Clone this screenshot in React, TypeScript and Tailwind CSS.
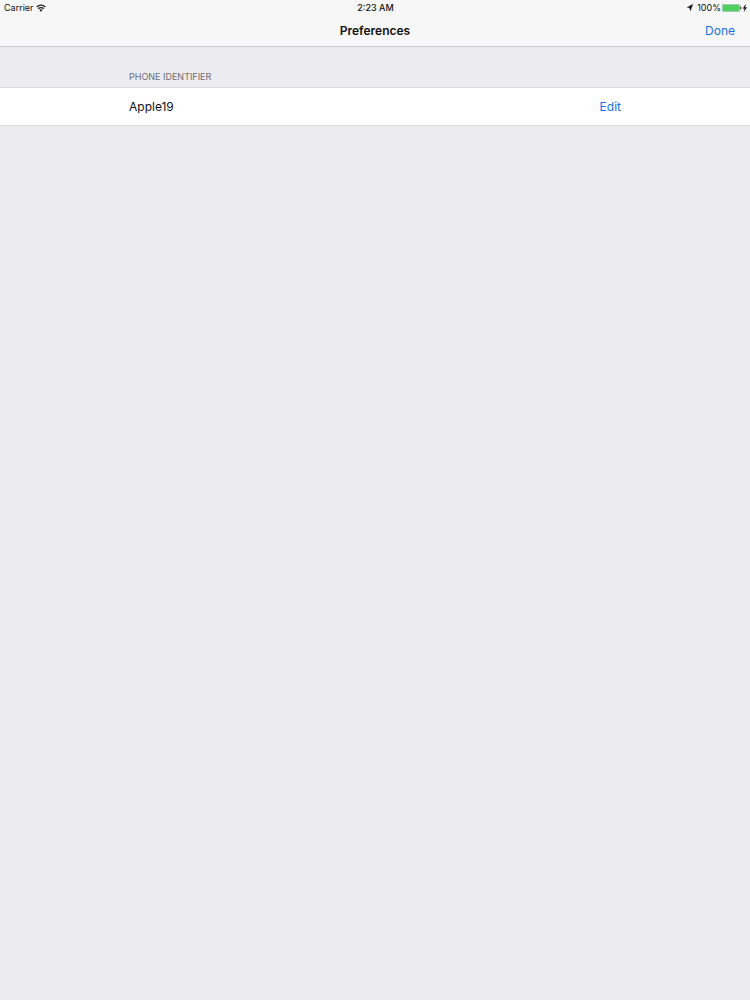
import React from 'react';

const WifiIcon = () => (
  <svg className="w-[10px] h-2" viewBox="0 0 20 16" fill="none" stroke="#222222" strokeWidth="2.8" aria-hidden="true">
    <path d="M1.5 5.8 A12 12 0 0 1 18.5 5.8" />
    <path d="M4.6 9.6 A7.4 7.4 0 0 1 15.4 9.6" />
    <path d="M10 15.4 L6.7 12.2 A4.6 4.6 0 0 1 13.3 12.2 Z" fill="#222222" stroke="none" />
  </svg>
);

const LocationIcon = () => (
  <svg className="w-[6px] h-[7px]" viewBox="0 0 12 14" fill="#111111" aria-hidden="true">
    <path d="M11.6 0.6 L0.4 6.8 L5.4 7.6 L6.8 13.4 Z" stroke="#111111" strokeWidth="0.8" />
  </svg>
);

const BatteryIcon = () => (
  <svg className="w-[25px] h-2" viewBox="0 0 50 16" aria-hidden="true">
    <rect x="0.5" y="0.5" width="35" height="15" rx="2.5" fill="#e6f5e8" stroke="#6f8f73" />
    <rect x="1.5" y="1.5" width="33" height="13" rx="1.5" fill="#50ce62" />
    <path d="M37 5 Q40 8 37 11 Z" fill="#333333" stroke="#333333" />
    <path d="M47 1 L42 9 L45.5 9 L44 15 L49.5 7 L46 7 Z" fill="#111111" stroke="#111111" strokeWidth="0.6" />
  </svg>
);

const App = () => {
  return (
    <div className="min-h-screen bg-[#ebebf0] font-['Inter','Liberation_Sans',sans-serif] text-[#111111]">
      <header className="bg-[#f7f7f7] border-b border-[#cbcbcf]">
        {/* Status bar */}
        <div className="grid grid-cols-3 items-center h-[15px] pl-1 pr-[3px] text-[9px]">
          <div className="flex items-center gap-[2px]">
            <span>Carrier</span>
            <WifiIcon />
          </div>
          <span className="text-center font-medium">2:23 AM</span>
          <div className="flex items-center justify-end">
            <LocationIcon />
            <span className="ml-1 mr-px">100%</span>
            <BatteryIcon />
          </div>
        </div>

        {/* Navigation bar */}
        <div className="grid grid-cols-3 items-center h-[31px] pt-px px-[15px] text-[12px]">
          <h1 className="col-start-2 text-center font-semibold">Preferences</h1>
          <button type="button" className="justify-self-end text-[#1672e6]">Done</button>
        </div>
      </header>

      <main className="pt-6">
        <h2 className="px-[129px] pb-1 text-[9px] leading-3 text-[#6d6d72]">PHONE IDENTIFIER</h2>
        <div className="flex items-center justify-between h-[39px] px-[129px] bg-white border-y border-[#dcdce0] text-[12px]">
          <span>Apple19</span>
          <button type="button" className="text-[#1672e6]">Edit</button>
        </div>
      </main>
    </div>
  );
};

export default App;
